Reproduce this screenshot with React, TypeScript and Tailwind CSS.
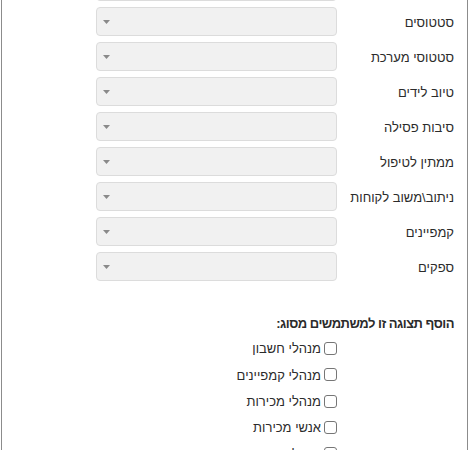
import React from "react";

const fields = [
  "משתמשים",
  "סטטוסים",
  "סטטוסי מערכת",
  "טיוב לידים",
  "סיבות פסילה",
  "ממתין לטיפול",
  "ניתוב\\משוב לקוחות",
  "קמפיינים",
  "ספקים",
];

const userTypes = [
  "מנהלי חשבון",
  "מנהלי קמפיינים",
  "מנהלי מכירות",
  "אנשי מכירות",
  "מנהלי מערכת",
];

function SelectBox() {
  return (
    <div className="flex h-[29px] w-[241px] items-center justify-end rounded-[4px] border border-[#dcdcdc] bg-[#f1f1f1] pl-[6px]">
      <svg width="7" height="4" viewBox="0 0 7 4" className="block">
        <path d="M0 0 L7 0 L3.5 4 Z" fill="#8a8a8a" />
      </svg>
    </div>
  );
}

export default function App() {
  return (
    <div
      dir="rtl"
      className="h-[450px] w-[470px] overflow-hidden bg-white pr-[2px] pl-px text-[13px] text-[#2b2b2b]"
      style={{ fontFamily: '"Liberation Sans", Arial, sans-serif' }}
    >
      <div className="flow-root h-full border-x border-[#8c8c8c]">
        <div className="-mt-[28px] flex flex-col gap-[6px]">
          {fields.map((f) => (
            <div key={f} className="flex items-center">
              <div className="w-[130px] pt-[3px] pr-[13px]">{f}</div>
              <SelectBox />
            </div>
          ))}
        </div>

        <div className="mt-[33px] pr-[13px] font-bold tracking-[-0.5px]">
          הוסף תצוגה זו למשתמשים מסוג:
        </div>

        <div className="mt-[2px] mr-[130px] flex flex-col">
          {userTypes.map((u) => (
            <label key={u} className="flex h-[26.3px] items-center gap-[3px]">
              <span className="block h-[13px] w-[13px] rounded-[3px] border border-[#767676] bg-white" />
              <span className="pt-px">{u}</span>
            </label>
          ))}
        </div>
      </div>
    </div>
  );
}
